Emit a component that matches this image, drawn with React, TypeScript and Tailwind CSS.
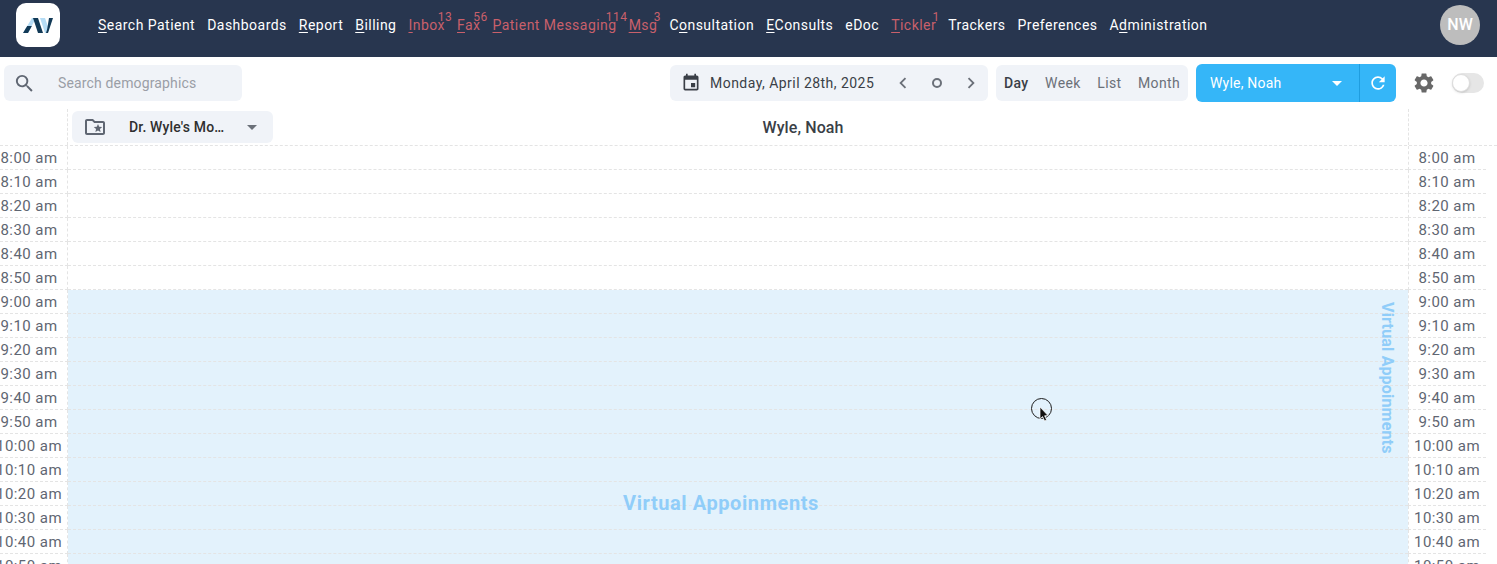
import React from "react";
import { MdSearch, MdEvent, MdChevronLeft, MdChevronRight, MdSettings, MdRefresh, MdArrowDropDown, MdOutlineFolderSpecial } from "react-icons/md";

type NavItem = { pre?: string; u?: string; post: string; red?: boolean; badge?: string };
const nav: NavItem[] = [
  { u: "S", post: "earch Patient" },
  { post: "Dashboards" },
  { u: "R", post: "eport" },
  { u: "B", post: "illing" },
  { u: "I", post: "nbox", red: true, badge: "13" },
  { u: "F", post: "ax", red: true, badge: "56" },
  { u: "P", post: "atient Messaging", red: true, badge: "114" },
  { u: "M", post: "sg", red: true, badge: "3" },
  { pre: "C", u: "o", post: "nsultation" },
  { u: "E", post: "Consults" },
  { post: "eDoc" },
  { u: "T", post: "ickler", red: true, badge: "1" },
  { post: "Trackers" },
  { post: "Preferences" },
  { pre: "A", u: "d", post: "ministration" },
];

const times = [
  "8:00 am", "8:10 am", "8:20 am", "8:30 am", "8:40 am", "8:50 am",
  "9:00 am", "9:10 am", "9:20 am", "9:30 am", "9:40 am", "9:50 am",
  "10:00 am", "10:10 am", "10:20 am", "10:30 am", "10:40 am", "10:50 am",
];

function Logo() {
  return (
    <svg width="30" height="15" viewBox="0 0 30 15" aria-hidden="true">
      <polygon points="0,15 9,0 13,0 5,15" fill="#b5dcf5" />
      <polygon points="0,15 4.2,8 8.9,8 5,15" fill="#123a57" />
      <polygon points="10,0 15,0 20,15 15,15" fill="#123a57" />
      <polygon points="17,0 22,0 26,11.5 24.5,15 22,15" fill="#b5dcf5" />
      <polygon points="26,0 30,0 25,15 23,15 24.2,11" fill="#123a57" />
    </svg>
  );
}

function Cursor() {
  return (
    <svg className="absolute left-[1030px] top-[395px]" width="24" height="32" viewBox="0 0 24 32" aria-hidden="true">
      <circle cx="11.5" cy="13.5" r="10" fill="none" stroke="#1c1c1c" strokeWidth="1" />
      <path d="M10 12 L10 24 L12.6 21.6 L14.6 26 L16.6 25 L14.6 20.8 L18 20.6 Z" fill="#111" stroke="#fff" strokeWidth="0.7" />
    </svg>
  );
}

export default function App() {
  return (
    <div className="relative h-[564px] w-[1497px] overflow-hidden bg-white font-['Roboto',sans-serif] text-[14px] text-[#2f2f2f]">
      <header className="flex h-[57px] items-start bg-[#28364f]">
        <div className="ml-4 mt-[3px] flex h-11 w-11 items-center justify-center rounded-[10px] bg-white">
          <Logo />
        </div>
        <nav className="ml-[38px] mt-[16px] flex gap-3 whitespace-nowrap text-[14px] leading-[18px] tracking-[0.47px] text-white">
          {nav.map((n) => (
            <span key={n.post} className={`relative ${n.red ? "text-[#c9606b]" : ""}`}>
              {n.pre}
              {n.u && <u className="underline-offset-2">{n.u}</u>}
              {n.post}
              {n.badge && (
                <span className="absolute -top-[6px] left-full -translate-x-1/2 text-[12px] leading-[14px]">{n.badge}</span>
              )}
            </span>
          ))}
        </nav>
        <div className="ml-auto mr-[17px] mt-[5px] flex h-10 w-10 items-center justify-center rounded-full bg-[#bdbdbd] text-[16px] font-medium text-white">
          NW
        </div>
      </header>

      <div className="flex h-[52px] items-center pl-1">
        <div className="flex h-9 w-[238px] items-center rounded-md bg-[#f0f3f8] pl-[9px]">
          <MdSearch size={23} className="text-[#5f6672]" />
          <span className="ml-[22px] tracking-[0.15px] text-[#9a9ea6]">Search demographics</span>
        </div>
        <div className="ml-[428px] flex h-9 w-[318px] items-center rounded-md bg-[#f0f3f8] pl-[11px] tracking-[0.46px]">
          <MdEvent size={20} className="text-[#3a3f47]" />
          <span className="ml-[9px] text-[#3a3f47]">Monday, April 28th, 2025</span>
          <MdChevronLeft size={22} className="ml-[18px] text-[#6b7079]" />
          <span className="ml-[18px] h-[10px] w-[10px] rounded-full border-2 border-[#6b7079]" />
          <MdChevronRight size={22} className="ml-[18px] text-[#6b7079]" />
        </div>
        <div className="ml-2 flex h-9 w-[192px] items-center justify-between rounded-md bg-[#f0f3f8] pl-2 pr-2 tracking-[0.35px] text-[#6b7079]">
          <span className="font-medium text-[#3a3f47]">Day</span>
          <span>Week</span>
          <span>List</span>
          <span>Month</span>
        </div>
        <div className="ml-2 flex h-[38px] w-[200px] items-center rounded-md bg-[#35b6f8] text-white">
          <span className="ml-[14px] tracking-[0.2px]">Wyle, Noah</span>
          <MdArrowDropDown size={24} className="ml-auto mr-[10px]" />
          <div className="flex h-full w-[37px] items-center justify-center border-l border-[#1f9ddf]">
            <MdRefresh size={20} />
          </div>
        </div>
        <MdSettings size={24} className="ml-4 text-[#686868]" />
        <div className="relative ml-4 h-[20px] w-8 rounded-full bg-[#e6e6e6]">
          <span className="absolute left-0 top-[1px] h-[18px] w-[18px] rounded-full border border-[#ddd] bg-white shadow-sm" />
        </div>
      </div>

      <div className="flex h-[36px]">
        <div className="h-full w-[68px] border-r border-dashed border-[#e4e4e4]" />
        <div className="relative flex flex-1 items-center justify-center pl-[130px] pt-[1px]">
          <div className="absolute left-1 top-[2px] flex h-8 w-[201px] items-center rounded-md bg-[#f0f3f8] pl-[11px] font-medium tracking-[0.15px] text-[#2f2f2f]">
            <MdOutlineFolderSpecial size={24} className="text-[#5f6672]" />
            <span className="ml-[22px] w-[96px] truncate">Dr. Wyle's Monthly</span>
            <MdArrowDropDown size={24} className="ml-[15px] text-[#6b7079]" />
          </div>
          <span className="text-[16px] font-medium tracking-[0.1px] text-[#3a3f47]">Wyle, Noah</span>
        </div>
        <div className="h-full w-[89px] border-l border-dashed border-[#e4e4e4]" />
      </div>

      <div className="flex flex-col border-t border-dashed border-[#e4e4e4]">
        {times.map((t, i) => (
          <div key={t} className="flex h-6 shrink-0">
            <div className="flex h-full w-[68px] shrink-0 items-center justify-center border-b border-r border-dashed border-[#e4e4e4] pr-[9px] pt-[2px] text-[15px] tracking-[0.45px] whitespace-nowrap text-[#5f6672]">
              {t}
            </div>
            <div className={`h-full flex-1 border-b border-dashed border-[#e4e4e4] ${i >= 6 ? "bg-[#e3f2fc]" : "bg-white"}`} />
            <div className="flex h-full w-[78px] shrink-0 items-center justify-center border-b border-l border-dashed border-[#e4e4e4] pr-[1px] pt-[2px] text-[15px] tracking-[0.45px] whitespace-nowrap text-[#5f6672]">
              {t}
            </div>
            <div className="w-[11px] shrink-0" />
          </div>
        ))}
      </div>

      <span className="absolute left-[623px] top-[491px] text-[20px] font-bold leading-6 tracking-[0.58px] text-[#90cdf9]">Virtual Appoinments</span>
      <span className="absolute left-[1379px] top-[302px] text-[16px] font-bold leading-4 tracking-[0.2px] text-[#90cdf9] [writing-mode:vertical-rl]">Virtual Appoinments</span>
      <Cursor />
    </div>
  );
}
